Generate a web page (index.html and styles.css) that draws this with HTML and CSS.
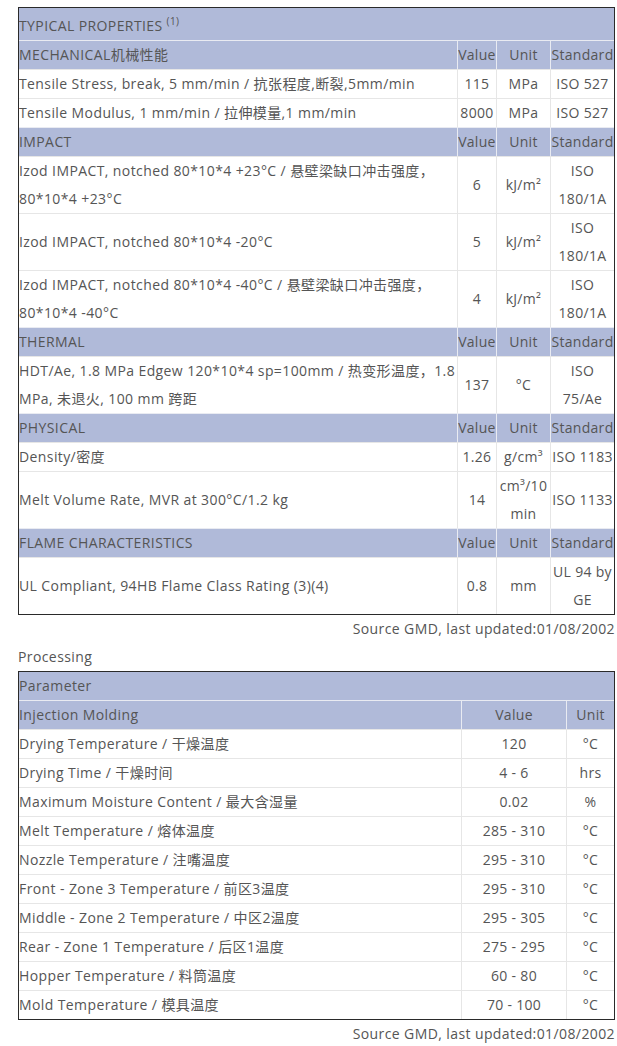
FILE: index.html
```html
<!DOCTYPE html>
<html>
<head>
<meta charset="utf-8">
<link rel="stylesheet" href="styles.css">
</head>
<body>
<div class="page">
  <table class="props">
    <colgroup><col><col class="c-val"><col class="c-unit"><col class="c-std"></colgroup>
    <tr class="hd title"><td colspan="4">TYPICAL PROPERTIES <sup>(1)</sup></td></tr>
    <tr class="hd"><td>MECHANICAL机械性能</td><td class="ctr">Value</td><td class="ctr">Unit</td><td class="ctr">Standard</td></tr>
    <tr><td>Tensile Stress, break, 5 mm/min / 抗张程度,断裂,5mm/min</td><td class="ctr">115</td><td class="ctr">MPa</td><td class="ctr">ISO 527</td></tr>
    <tr><td>Tensile Modulus, 1 mm/min / 拉伸模量,1 mm/min</td><td class="ctr">8000</td><td class="ctr">MPa</td><td class="ctr">ISO 527</td></tr>
    <tr class="hd"><td>IMPACT</td><td class="ctr">Value</td><td class="ctr">Unit</td><td class="ctr">Standard</td></tr>
    <tr><td>Izod IMPACT, notched 80*10*4 +23°C / 悬壁梁缺口冲击强度，<br>80*10*4 +23°C</td><td class="ctr">6</td><td class="ctr">kJ/m²</td><td class="ctr">ISO<br>180/1A</td></tr>
    <tr><td>Izod IMPACT, notched 80*10*4 -20°C</td><td class="ctr">5</td><td class="ctr">kJ/m²</td><td class="ctr">ISO<br>180/1A</td></tr>
    <tr><td>Izod IMPACT, notched 80*10*4 -40°C / 悬壁梁缺口冲击强度，<br>80*10*4 -40°C</td><td class="ctr">4</td><td class="ctr">kJ/m²</td><td class="ctr">ISO<br>180/1A</td></tr>
    <tr class="hd"><td>THERMAL</td><td class="ctr">Value</td><td class="ctr">Unit</td><td class="ctr">Standard</td></tr>
    <tr><td>HDT/Ae, 1.8 MPa Edgew 120*10*4 sp=100mm / 热变形温度，1.8<br>MPa, 未退火, 100 mm 跨距</td><td class="ctr">137</td><td class="ctr">°C</td><td class="ctr">ISO<br>75/Ae</td></tr>
    <tr class="hd"><td>PHYSICAL</td><td class="ctr">Value</td><td class="ctr">Unit</td><td class="ctr">Standard</td></tr>
    <tr><td>Density/密度</td><td class="ctr">1.26</td><td class="ctr">g/cm³</td><td class="ctr">ISO 1183</td></tr>
    <tr><td>Melt Volume Rate, MVR at 300°C/1.2 kg</td><td class="ctr">14</td><td class="ctr">cm³/10<br>min</td><td class="ctr">ISO 1133</td></tr>
    <tr class="hd"><td>FLAME CHARACTERISTICS</td><td class="ctr">Value</td><td class="ctr">Unit</td><td class="ctr">Standard</td></tr>
    <tr><td>UL Compliant, 94HB Flame Class Rating (3)(4)</td><td class="ctr">0.8</td><td class="ctr">mm</td><td class="ctr">UL 94 by<br>GE</td></tr>
  </table>
  <p class="source">Source GMD, last updated:01/08/2002</p>
  <p class="label">Processing</p>
  <table class="proc">
    <colgroup><col><col class="p-val"><col class="p-unit"></colgroup>
    <tr class="hd"><td colspan="3">Parameter</td></tr>
    <tr class="hd"><td>Injection Molding</td><td class="ctr">Value</td><td class="ctr">Unit</td></tr>
    <tr><td>Drying Temperature / 干燥温度</td><td class="ctr">120</td><td class="ctr">°C</td></tr>
    <tr><td>Drying Time / 干燥时间</td><td class="ctr">4 - 6</td><td class="ctr">hrs</td></tr>
    <tr><td>Maximum Moisture Content / 最大含湿量</td><td class="ctr">0.02</td><td class="ctr">%</td></tr>
    <tr><td>Melt Temperature / 熔体温度</td><td class="ctr">285 - 310</td><td class="ctr">°C</td></tr>
    <tr><td>Nozzle Temperature / 注嘴温度</td><td class="ctr">295 - 310</td><td class="ctr">°C</td></tr>
    <tr><td>Front - Zone 3 Temperature / 前区3温度</td><td class="ctr">295 - 310</td><td class="ctr">°C</td></tr>
    <tr><td>Middle - Zone 2 Temperature / 中区2温度</td><td class="ctr">295 - 305</td><td class="ctr">°C</td></tr>
    <tr><td>Rear - Zone 1 Temperature / 后区1温度</td><td class="ctr">275 - 295</td><td class="ctr">°C</td></tr>
    <tr><td>Hopper Temperature / 料筒温度</td><td class="ctr">60 - 80</td><td class="ctr">°C</td></tr>
    <tr><td>Mold Temperature / 模具温度</td><td class="ctr">70 - 100</td><td class="ctr">°C</td></tr>
  </table>
  <p class="source">Source GMD, last updated:01/08/2002</p>
</div>
</body>
</html>
```
FILE: styles.css
```css
html, body {
  margin: 0;
  padding: 0;
  background: #fff;
}
body {
  font-family: "Open Sans", "Noto Sans CJK SC", sans-serif;
  font-size: 14px;
  line-height: 28px;
  letter-spacing: 0.4px;
  color: #555;
}
.page {
  width: 597px;
  padding: 7px 0 0 18px;
}
table {
  width: 597px;
  border: 1px solid #2a2a2a;
  border-collapse: separate;
  border-spacing: 0;
  table-layout: fixed;
}
td {
  padding: 0;
  vertical-align: middle;
  border-top: 1px solid #e6e6e6;
  border-right: 1px solid #e6e6e6;
}
td:last-child {
  border-right: none;
}
tr:first-child td {
  border-top: none;
}
.ctr {
  text-align: center;
  padding: 0;
  letter-spacing: 0.3px;
}
.hd td {
  background: #b0bad9;
  border-color: #e9ebf2;
}
.title td {
  padding-top: 4px;
}
.title sup {
  font-size: 10px;
  line-height: 0;
  vertical-align: 6px;
}
.c-val { width: 39px; }
.c-unit { width: 54px; }
.c-std { width: 63px; }
.p-val { width: 105px; }
.p-unit { width: 47px; }
.source {
  margin: 0;
  text-align: right;
}
.label {
  margin: 0;
}
```
